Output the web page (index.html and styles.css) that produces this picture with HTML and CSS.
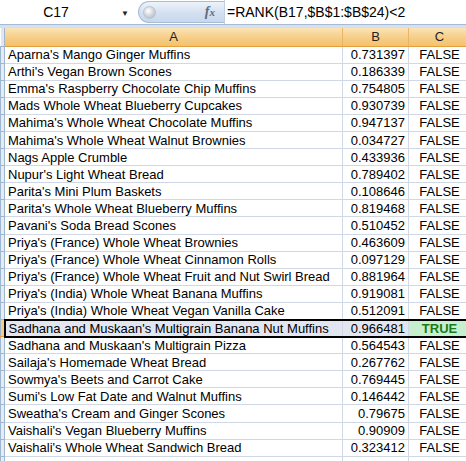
FILE: index.html
```html
<!DOCTYPE html>
<html lang="en">
<head>
  <meta charset="UTF-8">
  <title>Book1 – RANK</title>
  <link rel="stylesheet" href="styles.css">
</head>
<body>

  <div class="formula-bar">
    <div class="name-box">C17</div>
    <div class="name-arrow">&#9660;</div>
    <div class="fx-bubble">
      <span class="knob"></span>
      <span class="fx">f<i>x</i></span>
    </div>
    <div class="formula">=RANK(B17,$B$1:$B$24)&lt;2</div>
  </div>
  <div class="bar-gap"></div>

  <table class="sheet">
    <colgroup>
      <col class="col-rh">
      <col class="col-a">
      <col class="col-b">
      <col class="col-c">
    </colgroup>
    <thead>
      <tr>
        <th class="corner"></th>
        <th>A</th>
        <th>B</th>
        <th>C</th>
      </tr>
    </thead>
    <tbody id="rows"></tbody>
  </table>

  <script>
    const data = [
      ["Aparna's Mango Ginger Muffins", "0.731397"],
      ["Arthi's Vegan Brown Scones", "0.186339"],
      ["Emma's Raspberry Chocolate Chip Muffins", "0.754805"],
      ["Mads Whole Wheat Blueberry Cupcakes", "0.930739"],
      ["Mahima's Whole Wheat Chocolate Muffins", "0.947137"],
      ["Mahima's Whole Wheat Walnut Brownies", "0.034727"],
      ["Nags Apple Crumble", "0.433936"],
      ["Nupur's Light Wheat Bread", "0.789402"],
      ["Parita's Mini Plum Baskets", "0.108646"],
      ["Parita's Whole Wheat Blueberry Muffins", "0.819468"],
      ["Pavani's Soda Bread Scones", "0.510452"],
      ["Priya's (France) Whole Wheat Brownies", "0.463609"],
      ["Priya's (France) Whole Wheat Cinnamon Rolls", "0.097129"],
      ["Priya's (France) Whole Wheat Fruit and Nut Swirl Bread", "0.881964"],
      ["Priya's (India) Whole Wheat Banana Muffins", "0.919081"],
      ["Priya's (India) Whole Wheat Vegan Vanilla Cake", "0.512091"],
      ["Sadhana and Muskaan's Multigrain Banana Nut Muffins", "0.966481"],
      ["Sadhana and Muskaan's Multigrain Pizza", "0.564543"],
      ["Sailaja's Homemade Wheat Bread", "0.267762"],
      ["Sowmya's Beets and Carrot Cake", "0.769445"],
      ["Sumi's Low Fat Date and Walnut Muffins", "0.146442"],
      ["Sweatha's Cream and Ginger Scones", "0.79675"],
      ["Vaishali's Vegan Blueberry Muffins", "0.90909"],
      ["Vaishali's Whole Wheat Sandwich Bread", "0.323412"],
      ["", ""]
    ];

    // le max gagne : RANK(...)<2
    const max = Math.max(...data.filter(d => d[1]).map(d => +d[1]));
    const tbody = document.getElementById('rows');

    data.forEach(([name, val], i) => {
      const tr = document.createElement('tr');
      const win = val && +val === max;
      if (win) tr.className = 'active';
      const c = val ? (win ? 'TRUE' : 'FALSE') : '';
      tr.innerHTML =
        `<td class="rh"></td>` +
        `<td class="name">${name}</td>` +
        `<td class="num">${val}</td>` +
        `<td class="bool${win ? ' good' : ''}">${c}</td>`;
      tbody.appendChild(tr);
    });
  </script>
</body>
</html>
```

FILE: styles.css
```css
* { box-sizing: border-box; margin: 0; padding: 0; }
body {
  width: 466px;
  height: 461px;
  overflow: hidden;
  background: #fff;
  font-family: "Liberation Sans", Arial, sans-serif;
  font-size: 13px;
  color: #000;
}

/* barre de formule */
.formula-bar {
  display: flex;
  align-items: center;
  height: 25px;
  background: #fff;
  border-bottom: 1px solid #a7bad3;
}
.name-box {
  width: 112px;
  text-align: center;
  font-size: 14px;
}
.name-arrow {
  width: 26px;
  text-align: center;
  font-size: 8px;
  color: #222;
  padding-top: 2px;
}
.fx-bubble {
  display: flex;
  align-items: center;
  justify-content: space-between;
  width: 86px;
  height: 22px;
  padding: 0 9px 0 4px;
  border: 1px solid #a9bcd4;
  border-right: none;
  border-radius: 11px 0 0 11px;
  background: linear-gradient(#eef3fa, #d3e0f0 55%, #c8d8ec);
}
.knob {
  width: 13px;
  height: 13px;
  border-radius: 50%;
  background: radial-gradient(circle at 40% 35%, #fff, #c9ced6 60%, #aab3c0);
  border: 1px solid #b8c3d2;
}
.fx {
  font-family: "Liberation Serif", "Times New Roman", serif;
  font-style: italic;
  font-weight: bold;
  font-size: 14px;
  color: #5c6c84;
}
.fx i { font-size: 11px; }
.formula {
  flex: 1;
  height: 100%;
  line-height: 25px;
  padding-left: 2px;
  border-left: 1px solid #c4d0e0;
  font-size: 14px;
  white-space: nowrap;
}
.bar-gap {
  height: 3px;
  background: #d5e1f1;
}

/* grille */
.sheet {
  border-collapse: collapse;
  table-layout: fixed;
  width: 470px;
}
.col-rh { width: 4px; }
.col-a { width: 338px; }
.col-b { width: 66px; }
.col-c { width: 62px; }

.sheet th {
  height: 18px;
  font-weight: normal;
  font-size: 13px;
  text-align: center;
  background: linear-gradient(#fae3b6, #f6cf8a 50%, #f3c16c);
  border-right: 1px solid #e8b66a;
  border-bottom: 1px solid #e59f3d;
  color: #222;
}
.sheet th.corner {
  background: #dfe7f2;
  border-right: 1px solid #9eb6ce;
  border-bottom: 1px solid #9eb6ce;
}

.sheet td {
  height: 17.1px;
  padding: 0 3px;
  border: 1px solid #d0d7e5;
  white-space: nowrap;
  overflow: hidden;
  line-height: 15px;
}
.sheet td.rh {
  padding: 0;
  background: #e4ecf7;
  border-color: #9eb6ce;
}
.num { text-align: right; }
.bool { text-align: center; }

/* ligne sélectionnée */
.sheet tr.active td {
  background: #e2e6f1;
  border-top: 2px solid #000;
  border-bottom: 2px solid #000;
}
.sheet tr.active td.name { border-left: 2px solid #000; }
.sheet tr.active td.rh {
  background: #f6cd86;
  border-top: 1px solid #e59f3d;
  border-bottom: 1px solid #e59f3d;
}
.sheet tr.active td.good {
  background: #c6efce;
  color: #1a7a1a;
  font-weight: bold;
}
```
